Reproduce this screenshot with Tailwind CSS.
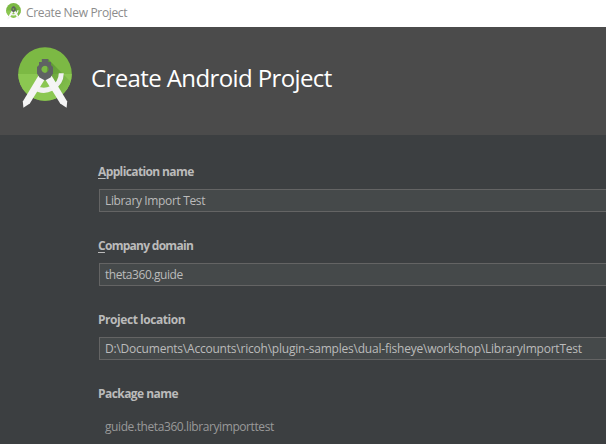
<!DOCTYPE html>
<html lang="en">
<head>
<meta charset="utf-8">
<title>Create New Project</title>
<script src="https://cdn.jsdelivr.net/npm/@tailwindcss/browser@4"></script>
</head>
<body class="w-[606px] h-[444px] overflow-hidden bg-[#3c3f41] font-['Open_Sans','Noto_Sans',sans-serif] flex flex-col text-[12px] text-[#bbbbbb]">
<svg width="0" height="0" class="absolute">
  <defs>
    <linearGradient id="sh" x1="0" y1="0" x2="1" y2="1"><stop offset="0" stop-color="#4d8a2c" stop-opacity=".8"/><stop offset="1" stop-color="#689f38" stop-opacity="0"/></linearGradient>
    <clipPath id="disc"><circle cx="27" cy="27" r="26.8"/></clipPath>
    <symbol id="studio" viewBox="0 0 54 62">
      <circle cx="27" cy="27" r="26.8" fill="#7cb944"/>
      <g clip-path="url(#disc)">
        <path d="M0 27h54v28H0z" fill="#8bc751"/>
        <path d="M30 12L56 38V54H50L28 32z" fill="url(#sh)"/>
      </g>
      <path d="M16 40A17.300 17.300 0 0 0 43.300 26.300" fill="none" stroke="#f1f1f1" stroke-width="5"/>
      <path d="M20.500 28.500L27 32L11.800 56.500L5.400 60.800L4.800 54.500z" fill="#f5f5f5"/>
      <path d="M33.500 28.500L27 32L42.200 56.500L48.600 60.800L49.200 54.500z" fill="#f5f5f5"/>
      <path fill-rule="evenodd" d="M23.800 12H30.200V15H33V18L35 20V26.500L32.500 30.500L27 33.500L21.500 30.500L19 26.500V20L21 18V15H23.800zM27 18.700a3.600 3.600 0 1 0 .01 0z" fill="#5f6263"/>
    </symbol>
  </defs>
</svg>
<div class="h-[27px] shrink-0 bg-white flex items-start pl-[6px] text-[#8c8c8c]">
  <svg class="w-[15px] h-[17px] mt-[3px]"><use href="#studio"/></svg>
  <span class="ml-[5px] mt-[4px] leading-[17px] whitespace-nowrap tracking-[-0.34px]">Create New Project</span>
</div>
<header class="h-[108px] shrink-0 bg-[#4b4b4b] flex items-start pl-[18px]">
  <svg class="w-[54px] h-[62px] mt-[20px] shrink-0"><use href="#studio"/></svg>
  <h1 class="ml-[19px] mt-[35px] text-[24px] leading-[32px] text-white whitespace-nowrap tracking-[-0.61px]">Create Android Project</h1>
</header>
<main class="pl-[98px] pt-[28px] flex flex-col">
  <div class="h-[74px]">
    <div class="h-[18px] leading-[18px] font-bold whitespace-nowrap tracking-[-0.62px]"><u class="underline-offset-2">A</u>pplication name</div>
    <div class="mt-[8px] ml-px h-[23px] w-[520px] border border-[#646464] bg-[#45494a] pl-[5px] leading-[21px] whitespace-nowrap tracking-[-0.36px]">Library Import Test</div>
  </div>
  <div class="h-[74px]">
    <div class="h-[18px] leading-[18px] font-bold whitespace-nowrap tracking-[-0.72px]"><u class="underline-offset-2">C</u>ompany domain</div>
    <div class="mt-[8px] ml-px h-[23px] w-[520px] border border-[#646464] bg-[#45494a] pl-[5px] leading-[21px] whitespace-nowrap tracking-[-0.45px]">theta360.guide</div>
  </div>
  <div class="h-[74px]">
    <div class="h-[18px] leading-[18px] font-bold whitespace-nowrap tracking-[-0.45px]">Project location</div>
    <div class="mt-[8px] ml-px h-[23px] w-[520px] border border-[#646464] bg-[#45494a] pl-[5px] leading-[21px] whitespace-nowrap tracking-[-0.22px]">D:\Documents\Accounts\ricoh\plugin-samples\dual-fisheye\workshop\LibraryImportTest</div>
  </div>
  <div class="h-[59px]">
    <div class="h-[18px] leading-[18px] font-bold whitespace-nowrap tracking-[-0.56px]">Package name</div>
    <div class="mt-[13px] pl-[7px] leading-[21px] whitespace-nowrap tracking-[-0.41px] text-[#999999]">guide.theta360.libraryimporttest</div>
  </div>
</main>
</body>
</html>
